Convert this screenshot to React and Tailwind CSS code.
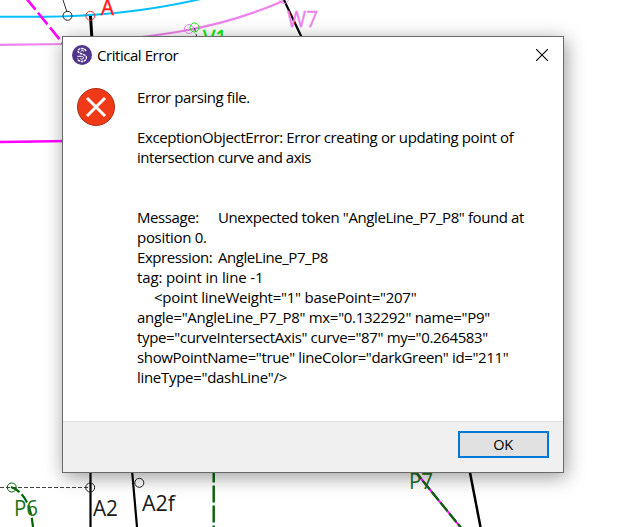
import React from 'react';
import { clsx } from 'clsx';

const messageLines = [
  { text: 'Error parsing file.', className: 'tracking-[-0.4px]' },
  { text: '' },
  { text: 'ExceptionObjectError: Error creating or updating point of', className: 'tracking-[-0.37px]' },
  { text: 'intersection curve and axis', className: 'tracking-[-0.48px]' },
  { text: '' },
  { text: '' },
  { label: 'Message:', text: 'Unexpected token "AngleLine_P7_P8" found at', className: 'tracking-[-0.41px]' },
  { text: 'position 0.', className: 'tracking-[-0.3px]' },
  { label: 'Expression:', text: 'AngleLine_P7_P8', className: 'tracking-[-0.45px]' },
  { text: 'tag: point in line -1', className: 'tracking-[-0.15px]' },
  { text: '<point lineWeight="1" basePoint="207"', className: 'pl-[17px] tracking-[-0.25px]' },
  { text: 'angle="AngleLine_P7_P8" mx="0.132292" name="P9"', className: 'tracking-[-0.3px]' },
  { text: 'type="curveIntersectAxis" curve="87" my="0.264583"', className: 'tracking-[-0.36px]' },
  { text: 'showPointName="true" lineColor="darkGreen" id="211"', className: 'tracking-[-0.36px]' },
  { text: 'lineType="dashLine"/>', className: 'tracking-[-0.3px]' },
];

const PatternDrawing = () => (
  <svg className="absolute inset-0" width="632" height="527" viewBox="0 0 632 527" fill="none">
    {/* curves */}
    <path d="M0 16.7H45C95 16.5 148 11 201 -1" stroke="#00bfff" strokeWidth="2" />
    <path d="M0 44.8L62 44C150 38 215 31 283 1" stroke="#ee82ee" strokeWidth="2.2" />
    <path d="M0 142L70 141" stroke="#f0f" strokeWidth="2.5" />
    <path d="M26 -2L65 46" stroke="#f0f" strokeWidth="2.6" strokeDasharray="15 4" />

    {/* axes */}
    <path d="M63 0L67 12" stroke="#333" />
    <path d="M90.5 16L92 40" stroke="#000" strokeWidth="3" />
    <path d="M284 0L302 38" stroke="#000" strokeWidth="2.2" />
    <path d="M90.5 470V527" stroke="#000" strokeWidth="2.2" />
    <path d="M132 470L137 527" stroke="#000" strokeWidth="2.2" />
    <path d="M469.5 470L480.5 527" stroke="#000" strokeWidth="2.5" />
    <path d="M0 487.5H90" stroke="#444" strokeDasharray="4 2" />

    {/* dashed green lines */}
    <path d="M213.7 472.5V527" stroke="#006400" strokeWidth="2.4" strokeDasharray="17 3" strokeDashoffset="7" />
    <path d="M11 487C25 492 31 507 33 527" stroke="#006400" strokeWidth="2.2" strokeDasharray="10 3" />
    <path d="M414 470L462 529" stroke="#f0f" strokeWidth="2" />
    <path d="M414 470L462 529" stroke="#006400" strokeWidth="2.3" strokeDasharray="11 3" />
    <path d="M194.5 28L197 38" stroke="#333" strokeDasharray="4 2" />

    {/* points */}
    <circle cx="67.5" cy="15.8" r="4.5" stroke="#222" />
    <circle cx="90.3" cy="15.8" r="4.5" stroke="#e33" />
    <circle cx="189" cy="29" r="4.5" stroke="#ee82ee" />
    <circle cx="194.5" cy="27.5" r="4.5" stroke="#1e1" />
    <circle cx="284" cy="-1" r="4.5" stroke="#ee82ee" />
    <circle cx="11.8" cy="487.5" r="4.5" stroke="#006400" />
    <circle cx="90.2" cy="487.5" r="4.5" stroke="#222" />
    <circle cx="139.3" cy="482.8" r="4.5" stroke="#222" />

    <g fontFamily="'Open Sans', sans-serif" fontSize="22">
      <text x="101" y="15" fontSize="21" textLength="13" lengthAdjust="spacingAndGlyphs" fill="#ff1a1a" stroke="#ff1a1a" strokeWidth="0.4">A</text>
      <text x="203" y="46" textLength="24" lengthAdjust="spacingAndGlyphs" fill="#0e0" stroke="#0e0" strokeWidth="0.4">V1</text>
      <text x="287" y="27" textLength="31" lengthAdjust="spacingAndGlyphs" fill="#ee82ee" stroke="#ee82ee" strokeWidth="0.3">W7</text>
      <text x="14" y="515.5" textLength="24" lengthAdjust="spacingAndGlyphs" fill="#1a731a">P6</text>
      <text x="93" y="516" textLength="25" lengthAdjust="spacingAndGlyphs" fill="#1a1a1a">A2</text>
      <text x="142" y="511" textLength="33" lengthAdjust="spacingAndGlyphs" fill="#1a1a1a">A2f</text>
      <text x="409" y="489" textLength="24" lengthAdjust="spacingAndGlyphs" fill="#1a731a">P7</text>
    </g>
  </svg>
);

const AppIcon = () => (
  <svg className="-mt-px" width="20" height="20" viewBox="0 0 20 20" fill="none">
    <circle cx="10" cy="10" r="10" fill="#51358a" />
    <path
      d="M14 6C13 2.6 6.200 2.600 6 6C6 9.500 14.600 8.500 14.400 12.800C14.200 17.600 6 17.600 5.600 13.400"
      stroke="#fff"
      strokeWidth="1.4"
      strokeDasharray="2.6 0.7"
    />
    <path
      d="M12 6.500C11 5.200 8.800 5.300 9 6.500M5.300 11.300H8C10 11.300 11.800 11.500 11.500 13C11 14.500 8.600 14.500 8 13.300"
      stroke="#fff"
      strokeWidth="1"
    />
  </svg>
);

const ErrorIcon = () => (
  <svg className="shrink-0" width="38" height="38" viewBox="0 0 38 38" fill="none">
    <circle cx="19" cy="19" r="18.5" fill="#f03a17" stroke="#a82c14" />
    <path d="M10 10L28 28M28 10L10 28" stroke="#fff" strokeWidth="3" />
  </svg>
);

const App = () => (
  <div className="relative h-[527px] w-[632px] overflow-hidden bg-white pl-[62px] pt-[36px] font-['Open_Sans',sans-serif] text-[15px] text-black">
    <PatternDrawing />
    <div className="relative flex h-[437px] w-[502px] flex-col border border-[#6b6b6b] bg-white shadow-[2px_4px_18px_rgba(0,0,0,0.4)]">
      <header className="flex h-[37px] shrink-0 items-center pl-[9px] pr-[15px]">
        <AppIcon />
        <h1 className="-mt-px ml-[5px] flex-1 tracking-[-0.45px]">Critical Error</h1>
        <button type="button" aria-label="Close" className="-mt-px">
          <svg width="12" height="12" viewBox="0 0 12 12" stroke="#000" strokeWidth="1.1">
            <path d="M0 0L12 12M12 0L0 12" />
          </svg>
        </button>
      </header>

      <main className="flex flex-1 items-start pl-[14px] pt-[14px]">
        <ErrorIcon />
        <div className="-mt-px ml-[22px] leading-[20px]">
          {messageLines.map((line, index) => (
            <div key={index} className={clsx('flex h-[20px] whitespace-pre', line.className)}>
              {line.label && <span className="w-[81px] shrink-0">{line.label}</span>}
              <span>{line.text}</span>
            </div>
          ))}
        </div>
      </main>

      <footer className="flex h-[51px] shrink-0 items-start justify-end border-t border-[#dfdfdf] bg-[#f0f0f0] pr-[14px] pt-[9px]">
        <button type="button" className="h-[27px] w-[91px] border-2 border-[#0078d7] bg-[#e1e1e1] pr-px text-[14.5px] leading-[24px] tracking-[-0.3px]">
          OK
        </button>
      </footer>
    </div>
  </div>
);

export default App;
